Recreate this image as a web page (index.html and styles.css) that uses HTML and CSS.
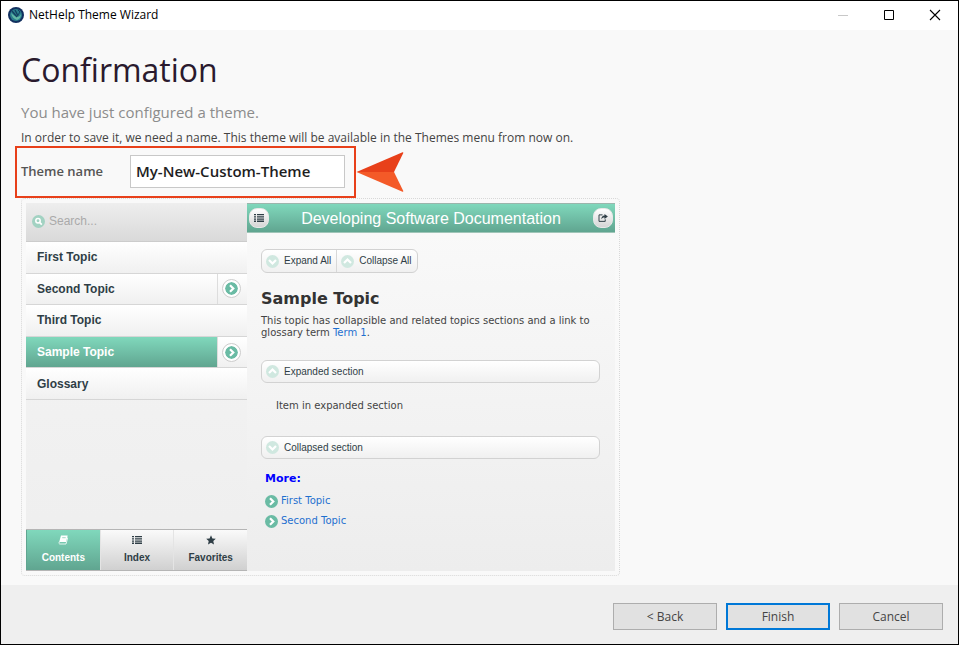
FILE: index.html
```html
<!DOCTYPE html>
<html lang="en">
<head>
<meta charset="utf-8">
<title>NetHelp Theme Wizard</title>
<link rel="stylesheet" href="styles.css">
</head>
<body>
<svg class="defs" aria-hidden="true">
  <symbol id="down" viewBox="0 0 13 13"><circle cx="6.5" cy="6.5" r="6.5"/><path d="M3 5l3.500 3.500L10 5" fill="none" stroke="#fff" stroke-width="2.200"/></symbol>
  <symbol id="up" viewBox="0 0 13 13"><circle cx="6.5" cy="6.5" r="6.5"/><path d="M3 8l3.500-3.500L10 8" fill="none" stroke="#fff" stroke-width="2.200"/></symbol>
  <symbol id="right" viewBox="0 0 13 13"><circle cx="6.500" cy="6.500" r="6.500"/><path d="M5 3.200l3.300 3.300L5 9.800" fill="none" stroke="#fff" stroke-width="2.200"/></symbol>
  <symbol id="list" viewBox="0 0 10 8"><path d="M0 0h2v1.300H0zM3 0h7v1.300H3zM0 2.200h2v1.300H0zM3 2.200h7v1.300H3zM0 4.400h2v1.300H0zM3 4.400h7v1.300H3zM0 6.600h2V8H0zM3 6.600h7V8H3z"/></symbol>
</svg>
<div class="window">
  <header class="titlebar">
    <svg class="logo" viewBox="0 0 16 16"><circle cx="8" cy="8" r="8" fill="#12305f"/><circle cx="8" cy="8" r="6" fill="#2b7f8c"/><path d="M3 6c1 4 3 6 6 7 3-1 4-3 4-6-1 2-2 3-4 3C7 9 5 8 3 6z" fill="#62b9a5"/><path d="M4 4l5 6M7 3l3 6" stroke="#14405f" stroke-width="1.300"/><path d="M10 3l2 2-2 3" fill="none" stroke="#14405f"/></svg>
    <span class="caption">NetHelp Theme Wizard</span>
    <button class="winbtn" aria-label="Minimize" disabled><svg viewBox="0 0 12 12"><path d="M1 6.500h10" stroke="#c8c8c8"/></svg></button>
    <button class="winbtn" aria-label="Maximize"><svg viewBox="0 0 12 12"><path d="M1.500 1.500h9v9h-9z" fill="none" stroke="#000"/></svg></button>
    <button class="winbtn" aria-label="Close"><svg viewBox="0 0 12 12"><path d="M1 1l10 10M11 1L1 11" stroke="#000" stroke-width="1.100"/></svg></button>
  </header>
  <main class="page">
    <h1>Confirmation</h1>
    <p class="lead">You have just configured a theme.</p>
    <p class="hint">In order to save it, we need a name. This theme will be available in the Themes menu from now on.</p>
    <div class="name-row">
      <div class="name-box">
        <label for="theme">Theme name</label>
        <input id="theme" type="text" value="My-New-Custom-Theme">
      </div>
      <svg class="arrow" viewBox="0 0 48 42"><path d="M.500 21L46.500 1.200q1-.200.800.800L38 21z" fill="#e8401a"/><path d="M.500 21L46.500 40.800q1 .200.800-.800L38 21z" fill="#f45a28"/></svg>
    </div>
    <section class="preview">
      <aside class="side">
        <div class="search">
          <svg viewBox="0 0 13 13"><circle cx="6.500" cy="6.500" r="6.500" fill="#a2d2c2"/><circle cx="6" cy="5.800" r="2.200" fill="none" stroke="#fff" stroke-width="1.500"/><path d="M7.600 7.400l2.200 2.300" stroke="#fff" stroke-width="1.700"/></svg>
          <input type="text" placeholder="Search..." aria-label="Search">
        </div>
        <nav class="topics">
          <div class="topic"><a href="#">First Topic</a></div>
          <div class="topic"><a href="#">Second Topic</a><button class="open" aria-label="Open Second Topic"><svg><use href="#right"/></svg></button></div>
          <div class="topic"><a href="#">Third Topic</a></div>
          <div class="topic current"><a href="#">Sample Topic</a><button class="open" aria-label="Open Sample Topic"><svg><use href="#right"/></svg></button></div>
          <div class="topic"><a href="#">Glossary</a></div>
        </nav>
        <div class="tabs">
          <button class="tab active"><svg viewBox="0 0 10 10"><path d="M3 .5h6.700L8 7H1.200z"/><path d="M1.200 7q-.7 1.800.500 2h6.300L9.800 2.500" fill="none" stroke="#fff" stroke-width=".8"/><path d="M4.200 2.700h3.500" stroke="#78c5ab" stroke-width=".7"/></svg>Contents</button>
          <button class="tab"><svg viewBox="0 -1 10 10"><use href="#list" width="10" height="8"/></svg>Index</button>
          <button class="tab"><svg viewBox="0 0 10 10"><path d="M5 .3l1.400 3.100 3.400.400-2.500 2.300.700 3.400L5 7.800 2 9.500l.7-3.400L.2 3.800l3.400-.4z"/></svg>Favorites</button>
        </div>
      </aside>
      <article class="doc">
        <header class="doc-head">
          <button class="round" aria-label="Menu"><svg viewBox="0 0 10 8"><use href="#list"/></svg></button>
          <h2>Developing Software Documentation</h2>
          <button class="round" aria-label="Share"><svg viewBox="0 0 11 9"><path d="M5 1H1v7.300h7V6" fill="none" stroke="#2f3e46" stroke-width="1.100"/><path d="M7.200 0L11 2.800 7.200 5.600V4C5.500 4 4.300 4.600 3.500 6 3.500 3.500 4.800 1.800 7.200 1.600z"/></svg></button>
        </header>
        <div class="doc-body">
          <div class="group"><button><svg><use href="#down"/></svg>Expand All</button><button><svg><use href="#up"/></svg>Collapse All</button></div>
          <h3>Sample Topic</h3>
          <p class="text">This topic has collapsible and related topics sections and a link to glossary term <a href="#">Term 1</a>.</p>
          <button class="bar"><svg><use href="#up"/></svg>Expanded section</button>
          <p class="item">Item in expanded section</p>
          <button class="bar"><svg><use href="#down"/></svg>Collapsed section</button>
          <h4>More:</h4>
          <ul>
            <li><svg><use href="#right"/></svg><a href="#">First Topic</a></li>
            <li><svg><use href="#right"/></svg><a href="#">Second Topic</a></li>
          </ul>
        </div>
      </article>
    </section>
  </main>
  <footer class="actions">
    <button>&lt; Back</button>
    <button class="primary">Finish</button>
    <button>Cancel</button>
  </footer>
</div>
</body>
</html>
```
FILE: styles.css
```css
* { box-sizing: border-box; }
body { margin: 0; font-family: "Open Sans", "Noto Sans", sans-serif; font-size: 12px; color: #444; }
h1, h2, h3, h4, p, ul { margin: 0; padding: 0; font-weight: normal; }
button, input { font: inherit; color: inherit; margin: 0; padding: 0; border: 0; background: none; }
a { color: #1f70cf; text-decoration: none; }
svg { display: block; flex: none; }
.defs { position: absolute; width: 0; height: 0; }

.window { min-height: 100vh; display: flex; flex-direction: column; border: 1px solid #000; background: #f9f9f9; }
.titlebar { display: flex; align-items: center; height: 29px; padding: 0 0 2px 7px; background: #fff; color: #000; }
.logo { width: 16px; height: 16px; }
.caption { flex: 1; padding-left: 5px; }
.winbtn { width: 46px; height: 27px; display: flex; align-items: center; justify-content: center; }
.winbtn svg { width: 12px; height: 12px; }

.page { flex: 1; padding: 16px 20px 9px; }
h1 { font-size: 32px; line-height: 48px; color: #2a1a2e; }
.lead { margin-top: 6px; font-size: 15px; line-height: 24px; color: #8c8c8c; }
.hint { margin-top: 2px; line-height: 24px; }
.name-row { display: flex; align-items: center; margin: -4px 0 0 -6px; }
.name-box { display: flex; align-items: center; width: 341px; height: 52px; padding: 0 9px 2px 4px; border: 2px solid #e8401a; }
.name-box label { flex: 1; font-size: 13px; font-weight: 600; color: #555; }
.name-box input { width: 215px; height: 33px; padding: 0 5px; border: 1px solid #c8c8c8; background: #fff; font-size: 15px; font-weight: 600; color: #1e1e1e; }
.arrow { width: 48px; height: 42px; }

.preview { display: flex; width: 599px; max-width: 100%; min-height: 378px; padding: 4px; border: 1px dotted #d8d8d8; border-radius: 4px; font-family: "Liberation Sans", sans-serif; }
.side { display: flex; flex-direction: column; width: 221px; background: linear-gradient(#f5f5f5, #eee); }
.search { display: flex; align-items: center; gap: 4px; height: 39px; padding: 0 0 2px 6px; border-bottom: 1px solid #ccc; background: linear-gradient(#eee, #d9d9d9); }
.search svg { width: 13px; height: 13px; }
.search input { width: 150px; font-size: 12px; outline: 0; }
.search input::placeholder { color: #aaa; opacity: 1; }
.topics { display: grid; grid-auto-rows: 1fr; height: 158px; }
.topic { display: flex; border-bottom: 1px solid #d6d6d6; background: linear-gradient(#fff, #f0f0f0); }
.topic a { flex: 1; display: flex; align-items: center; padding-left: 11px; font-size: 12px; font-weight: bold; color: #2f3e46; }
.topic.current a { color: #fff; background: linear-gradient(#80d8bc, #60a590); }
.open { display: flex; align-items: center; justify-content: center; width: 30px; padding-right: 2px; border-left: 1px solid #ddd; }
.open svg { box-sizing: content-box; width: 13px; height: 13px; padding: 2px; border: 1px solid #ccc; border-radius: 50%; background: #fff; fill: #6abba4; }
.tabs { display: grid; grid-template-columns: 1fr 1fr 1fr; height: 42px; margin-top: auto; border-top: 1px solid #b5b5b5; border-bottom: 1px solid #b5b5b5; }
.tab { display: flex; flex-direction: column; align-items: center; gap: 7px; padding-top: 5px; border-left: 1px solid #e4e4e4; background: linear-gradient(#fafafa, #d0d0d0); font-size: 10px; line-height: 12px; font-weight: bold; color: #2f3e46; fill: #2f3e46; }
.tab svg { width: 10px; height: 10px; }
.tab.active { border-color: #60a590; background: linear-gradient(#80d8bc, #60a590); color: #fff; fill: #fff; }

.doc { flex: 1; background: linear-gradient(#fafafa, #ededed); }
.doc-head { display: flex; align-items: center; height: 30px; padding: 0 2px; border-top: 1px solid #9bb5ac; border-bottom: 1px solid #9fc5b8; background: linear-gradient(#80d8bc, #60a590); }
.doc-head h2 { flex: 1; padding-top: 2px; text-align: center; font-size: 16px; line-height: 20px; color: #fff; }
.round { display: flex; align-items: center; justify-content: center; width: 20px; height: 20px; border: 1px solid #e8e8e8; border-radius: 8px; background: linear-gradient(#fff, #d5d5d5); fill: #2f3e46; }
.round svg { width: 10px; height: 8px; }
.doc-body { padding: 16px 15px 0 14px; font-family: "DejaVu Sans", sans-serif; font-size: 10px; line-height: 12px; color: #444; }
.group { display: inline-flex; border: 1px solid #d2d2d2; border-radius: 6px; background: linear-gradient(#fff, #f0f0f0); vertical-align: top; }
.group button, .bar { display: flex; align-items: center; gap: 5px; height: 22px; padding: 0 5px 0 4px; font-family: "Liberation Sans", sans-serif; font-size: 10px; color: #2f3e46; fill: #d0e8e0; }
.group button + button { border-left: 1px solid #d8d8d8; }
.group svg, .bar svg, li svg { width: 13px; height: 13px; }
h3 { margin-top: 16px; font-size: 16px; line-height: 20px; font-weight: bold; color: #333; }
.text { margin-top: 6px; }
.bar { width: 100%; height: 23px; border: 1px solid #d2d2d2; border-radius: 6px; background: linear-gradient(#fff, #f0f0f0); }
.text + .bar { margin-top: 21px; }
.item { padding: 17px 15px 24px; }
h4 { margin: 14px 0 0 4px; font-size: 11px; line-height: 12px; font-weight: bold; color: #00f; }
ul { margin: 6px 0 0 4px; list-style: none; }
li { display: flex; align-items: center; gap: 3px; height: 20px; fill: #6abba4; }

.actions { display: flex; justify-content: flex-end; gap: 9px; padding: 18px 15px 14px; background: #efefef; }
.actions button { width: 104px; height: 27px; border: 1px solid #adadad; background: #e1e1e1; }
.actions .primary { border: 2px solid #0078d7; }
```
